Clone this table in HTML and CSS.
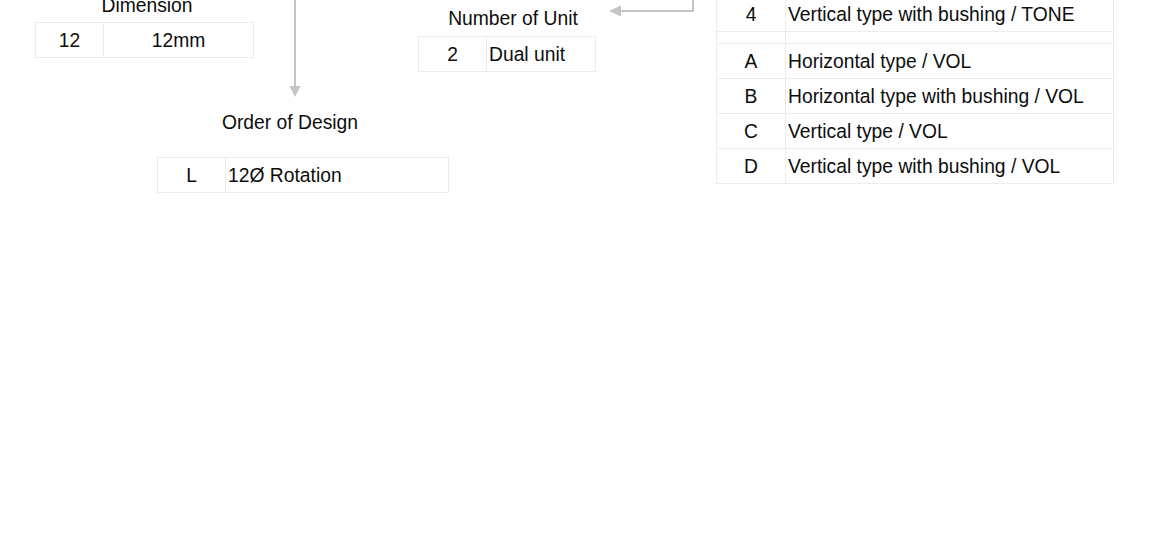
FILE: index.html
```html
<!DOCTYPE html>
<html>
<head>
<meta charset="utf-8">
<link rel="stylesheet" href="styles.css">
</head>
<body>
<div class="canvas">
  <svg class="connectors" width="1150" height="542" viewBox="0 0 1150 542">
    <line x1="295" y1="0" x2="295" y2="89" stroke="#c4c4c4" stroke-width="2"/>
    <polygon points="289.5,86 300.5,86 295,97" fill="#c4c4c4"/>
    <polyline points="693,0 693,11 619,11" fill="none" stroke="#c4c4c4" stroke-width="2"/>
    <polygon points="609,11 621,5.5 621,16.5" fill="#c4c4c4"/>
  </svg>

  <section class="group g-dim">
    <div class="label">Dimension</div>
    <table class="tbl">
      <tr><td class="code">12</td><td class="desc center">12mm</td></tr>
    </table>
  </section>

  <section class="group g-unit">
    <div class="label">Number of Unit</div>
    <table class="tbl">
      <tr><td class="code">2</td><td class="desc">Dual unit</td></tr>
    </table>
  </section>

  <section class="group g-order">
    <div class="label">Order of Design</div>
    <table class="tbl">
      <tr><td class="code">L</td><td class="desc">12Ø Rotation</td></tr>
    </table>
  </section>

  <section class="group g-type">
    <table class="tbl">
      <tr><td class="code">4</td><td class="desc">Vertical type with bushing / TONE</td></tr>
      <tr class="spacer"><td></td><td></td></tr>
      <tr><td class="code">A</td><td class="desc">Horizontal type / VOL</td></tr>
      <tr><td class="code">B</td><td class="desc">Horizontal type with bushing / VOL</td></tr>
      <tr><td class="code">C</td><td class="desc">Vertical type / VOL</td></tr>
      <tr><td class="code">D</td><td class="desc">Vertical type with bushing / VOL</td></tr>
    </table>
  </section>
</div>
</body>
</html>
```

FILE: styles.css
```css
html, body {
  margin: 0;
  padding: 0;
  background: #ffffff;
}

body {
  font-family: "Liberation Sans", Arial, sans-serif;
  font-size: 19.3px;
  color: #0d0d0d;
}

.canvas {
  position: relative;
  width: 1150px;
  height: 542px;
  overflow: hidden;
}

.connectors {
  position: absolute;
  left: 0;
  top: 0;
}

.group {
  position: absolute;
}

.label {
  line-height: 22px;
  text-align: center;
  white-space: nowrap;
}

.tbl {
  border-collapse: collapse;
  width: 100%;
  table-layout: fixed;
}

.tbl td {
  border: 1px solid #ececec;
  height: 33px;
  padding: 1px 0 0 0;
  line-height: 22px;
  white-space: nowrap;
}

.tbl td.code {
  text-align: center;
}

.tbl td.desc {
  padding-left: 2px;
}

.tbl td.desc.center {
  text-align: center;
  padding-left: 0;
}

.tbl tr.spacer td {
  height: 10px;
}

/* Dimension */
.g-dim {
  left: 35px;
  top: -5px;
  width: 219px;
}
.g-dim .label {
  padding-left: 5px;
  margin-bottom: 5px;
}
.g-dim .code { width: 67px; }

/* Number of Unit */
.g-unit {
  left: 418px;
  top: 8px;
  width: 178px;
}
.g-unit .label {
  padding-left: 12px;
  margin-bottom: 6px;
}
.g-unit .code { width: 67px; }

/* Order of Design */
.g-order {
  left: 157px;
  top: 112px;
  width: 292px;
}
.g-order .label {
  padding-right: 26px;
  margin-bottom: 23px;
}
.g-order .code { width: 67px; }

/* Type table */
.g-type {
  left: 716px;
  top: -4px;
  width: 398px;
}
.g-type .code { width: 68px; }
```
